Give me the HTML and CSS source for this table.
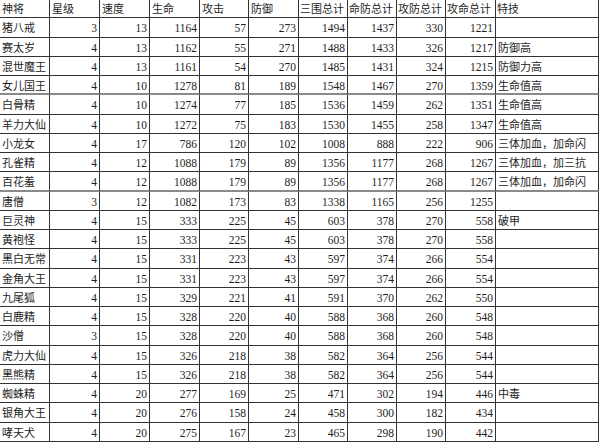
FILE: index.html
```html
<!DOCTYPE html>
<html lang="zh">
<head>
<meta charset="utf-8">
<title>神将属性表</title>
<link rel="stylesheet" href="styles.css">
</head>
<body>
<div class="sheet">
  <div class="row head"><div>神将</div><div>星级</div><div>速度</div><div>生命</div><div>攻击</div><div>防御</div><div>三围总计</div><div>命防总计</div><div>攻防总计</div><div>攻命总计</div><div>特技</div></div>
  <div class="row"><div>猪八戒</div><div>3</div><div>13</div><div>1164</div><div>57</div><div>273</div><div>1494</div><div>1437</div><div>330</div><div>1221</div><div></div></div>
  <div class="row"><div>赛太岁</div><div>4</div><div>13</div><div>1162</div><div>55</div><div>271</div><div>1488</div><div>1433</div><div>326</div><div>1217</div><div>防御高</div></div>
  <div class="row"><div>混世魔王</div><div>4</div><div>13</div><div>1161</div><div>54</div><div>270</div><div>1485</div><div>1431</div><div>324</div><div>1215</div><div>防御力高</div></div>
  <div class="row sep"><div>女儿国王</div><div>4</div><div>10</div><div>1278</div><div>81</div><div>189</div><div>1548</div><div>1467</div><div>270</div><div>1359</div><div>生命值高</div></div>
  <div class="row"><div>白骨精</div><div>4</div><div>10</div><div>1274</div><div>77</div><div>185</div><div>1536</div><div>1459</div><div>262</div><div>1351</div><div>生命值高</div></div>
  <div class="row"><div>羊力大仙</div><div>4</div><div>10</div><div>1272</div><div>75</div><div>183</div><div>1530</div><div>1455</div><div>258</div><div>1347</div><div>生命值高</div></div>
  <div class="row"><div>小龙女</div><div>4</div><div>17</div><div>786</div><div>120</div><div>102</div><div>1008</div><div>888</div><div>222</div><div>906</div><div>三体加血，加命闪</div></div>
  <div class="row"><div>孔雀精</div><div>4</div><div>12</div><div>1088</div><div>179</div><div>89</div><div>1356</div><div>1177</div><div>268</div><div>1267</div><div>三体加血，加三抗</div></div>
  <div class="row sep"><div>百花羞</div><div>4</div><div>12</div><div>1088</div><div>179</div><div>89</div><div>1356</div><div>1177</div><div>268</div><div>1267</div><div>三体加血，加命闪</div></div>
  <div class="row"><div>唐僧</div><div>3</div><div>12</div><div>1082</div><div>173</div><div>83</div><div>1338</div><div>1165</div><div>256</div><div>1255</div><div></div></div>
  <div class="row"><div>巨灵神</div><div>4</div><div>15</div><div>333</div><div>225</div><div>45</div><div>603</div><div>378</div><div>270</div><div>558</div><div>破甲</div></div>
  <div class="row"><div>黄袍怪</div><div>4</div><div>15</div><div>333</div><div>225</div><div>45</div><div>603</div><div>378</div><div>270</div><div>558</div><div></div></div>
  <div class="row"><div>黑白无常</div><div>4</div><div>15</div><div>331</div><div>223</div><div>43</div><div>597</div><div>374</div><div>266</div><div>554</div><div></div></div>
  <div class="row"><div>金角大王</div><div>4</div><div>15</div><div>331</div><div>223</div><div>43</div><div>597</div><div>374</div><div>266</div><div>554</div><div></div></div>
  <div class="row"><div>九尾狐</div><div>4</div><div>15</div><div>329</div><div>221</div><div>41</div><div>591</div><div>370</div><div>262</div><div>550</div><div></div></div>
  <div class="row"><div>白鹿精</div><div>4</div><div>15</div><div>328</div><div>220</div><div>40</div><div>588</div><div>368</div><div>260</div><div>548</div><div></div></div>
  <div class="row"><div>沙僧</div><div>3</div><div>15</div><div>328</div><div>220</div><div>40</div><div>588</div><div>368</div><div>260</div><div>548</div><div></div></div>
  <div class="row"><div>虎力大仙</div><div>4</div><div>15</div><div>326</div><div>218</div><div>38</div><div>582</div><div>364</div><div>256</div><div>544</div><div></div></div>
  <div class="row"><div>黑熊精</div><div>4</div><div>15</div><div>326</div><div>218</div><div>38</div><div>582</div><div>364</div><div>256</div><div>544</div><div></div></div>
  <div class="row"><div>蜘蛛精</div><div>4</div><div>20</div><div>277</div><div>169</div><div>25</div><div>471</div><div>302</div><div>194</div><div>446</div><div>中毒</div></div>
  <div class="row"><div>银角大王</div><div>4</div><div>20</div><div>276</div><div>158</div><div>24</div><div>458</div><div>300</div><div>182</div><div>434</div><div></div></div>
  <div class="row"><div>哮天犬</div><div>4</div><div>20</div><div>275</div><div>167</div><div>23</div><div>465</div><div>298</div><div>190</div><div>442</div><div></div></div>
</div>
</body>
</html>
```
FILE: styles.css
```css
html, body {
  margin: 0;
  padding: 0;
  background: #ffffff;
}

.sheet {
  display: flex;
  flex-direction: column;
  width: 599px;
  margin-top: -1px;
  color: #1e1e1e;
}

.row {
  display: flex;
  height: 19.25px;
  flex: none;
}

.row > div {
  box-sizing: border-box;
  flex: none;
  height: 100%;
  border-right: 1px solid #333333;
  border-bottom: 1px solid #333333;
  font-family: "Liberation Serif", serif;
  font-size: 11.5px;
  text-align: right;
  padding: 2px 2px 0 0;
  line-height: 16px;
  white-space: nowrap;
  overflow: hidden;
}

.row > div:nth-child(1),
.row > div:nth-child(11),
.row.head > div {
  font-family: "Noto Sans CJK SC", "Liberation Sans", sans-serif;
  font-size: 11px;
  text-align: left;
  padding: 1px 0 0 2px;
}

.row > div:nth-child(1) { width: 50px; }
.row > div:nth-child(2) { width: 50px; }
.row > div:nth-child(3) { width: 50px; }
.row > div:nth-child(4) { width: 50px; }
.row > div:nth-child(5) { width: 49px; }
.row > div:nth-child(6) { width: 50px; }
.row > div:nth-child(7) { width: 49px; }
.row > div:nth-child(8) { width: 49px; }
.row > div:nth-child(9) { width: 49px; }
.row > div:nth-child(10) { width: 50px; }
.row > div:nth-child(11) { width: 103px; }

.row.head > div:nth-child(n+7) {
  padding-left: 1px;
}

.row.sep > div {
  border-bottom: 2px solid #8a8a8a;
}
```
